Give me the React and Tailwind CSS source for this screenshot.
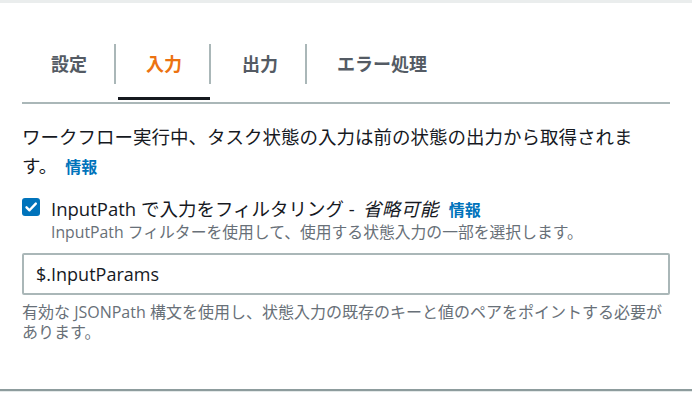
import React from "react";

const FONT = { fontFamily: '"Open Sans", "Noto Sans CJK JP", sans-serif' };

function Tab({ label, active, pl }) {
  return (
    <div className={`flex flex-col ${pl} pr-[27px]`}>
      <div className="pt-[41px]">
        <div
          className={`h-[40px] flex items-center text-[18px] font-bold leading-none whitespace-nowrap ${
            active ? "text-[#ec7211]" : "text-[#545b64]"
          }`}
        >
          {label}
        </div>
      </div>
      <div className="mt-[13px] h-[3px]" />
    </div>
  );
}

function Sep() {
  return <div className="mt-[41px] h-[40px] w-[2px] bg-[#aab7b8] shrink-0" />;
}

export default function App() {
  return (
    <div className="w-[692px] h-[402px] bg-white overflow-hidden text-[#16191f]" style={FONT}>
      <div className="h-[3px] bg-[#eaeded]" />
      <div className="px-[22px]">
        <div className="flex border-b-2 border-[#aab7b8] pb-[2px]">
          <Tab label="設定" pl="pl-[29px]" />
          <Sep />
          <div className="relative flex">
            <Tab label="入力" active pl="pl-[30px]" />
            <div className="absolute left-[2px] right-[-1px] bottom-0 h-[3px] bg-[#16191f]" />
          </div>
          <Sep />
          <Tab label="出力" pl="pl-[31px]" />
          <Sep />
          <Tab label="エラー処理" pl="pl-[30px]" />
        </div>

        <p className="pt-[18px] text-[18.5px] leading-[29px] whitespace-nowrap">
          ワークフロー実行中、タスク状態の入力は前の状態の出力から取得されま
          <br />
          す。
          <span className="ml-[8px] text-[16px] font-bold text-[#0073bb]">情報</span>
        </p>

        <div className="mt-[15px] flex items-start gap-[11px]">
          <div className="mt-[1px] w-[18px] h-[18px] rounded-[3px] bg-[#0073bb] flex items-center justify-center shrink-0">
            <svg width="14" height="14" viewBox="0 0 14 14" fill="none">
              <path d="M2.5 7.3l3 3L11.8 3.6" stroke="white" strokeWidth="2.4" strokeLinecap="round" strokeLinejoin="round" />
            </svg>
          </div>
          <div>
            <div className="text-[18.5px] leading-[24px] whitespace-nowrap">
              InputPath で入力をフィルタリング -{" "}
              <span className="ml-[3px] italic font-normal tracking-[0.5px]">省略可能</span>
              <span className="ml-[10px] text-[16px] font-bold text-[#0073bb]">情報</span>
            </div>
            <div className="text-[15.8px] leading-[20px] text-[#687078] whitespace-nowrap">
              InputPath フィルターを使用して、使用する状態入力の一部を選択します。
            </div>
          </div>
        </div>

        <div className="mt-[11px] h-[42px] border-2 border-[#aab7b8] rounded-[2px] flex items-center pl-[12px] text-[18px] text-[#16191f]">
          $.InputParams
        </div>

        <p className="mt-[7px] text-[16px] leading-[20px] text-[#687078] whitespace-nowrap">
          有効な JSONPath 構文を使用し、状態入力の既存のキーと値のペアをポイントする必要が
          <br />
          あります。
        </p>
      </div>
      <div className="mt-[47px] h-[2px] bg-[#8d9c9d]" />
      <div className="h-[1px] bg-[#e4e9e9]" />
    </div>
  );
}
